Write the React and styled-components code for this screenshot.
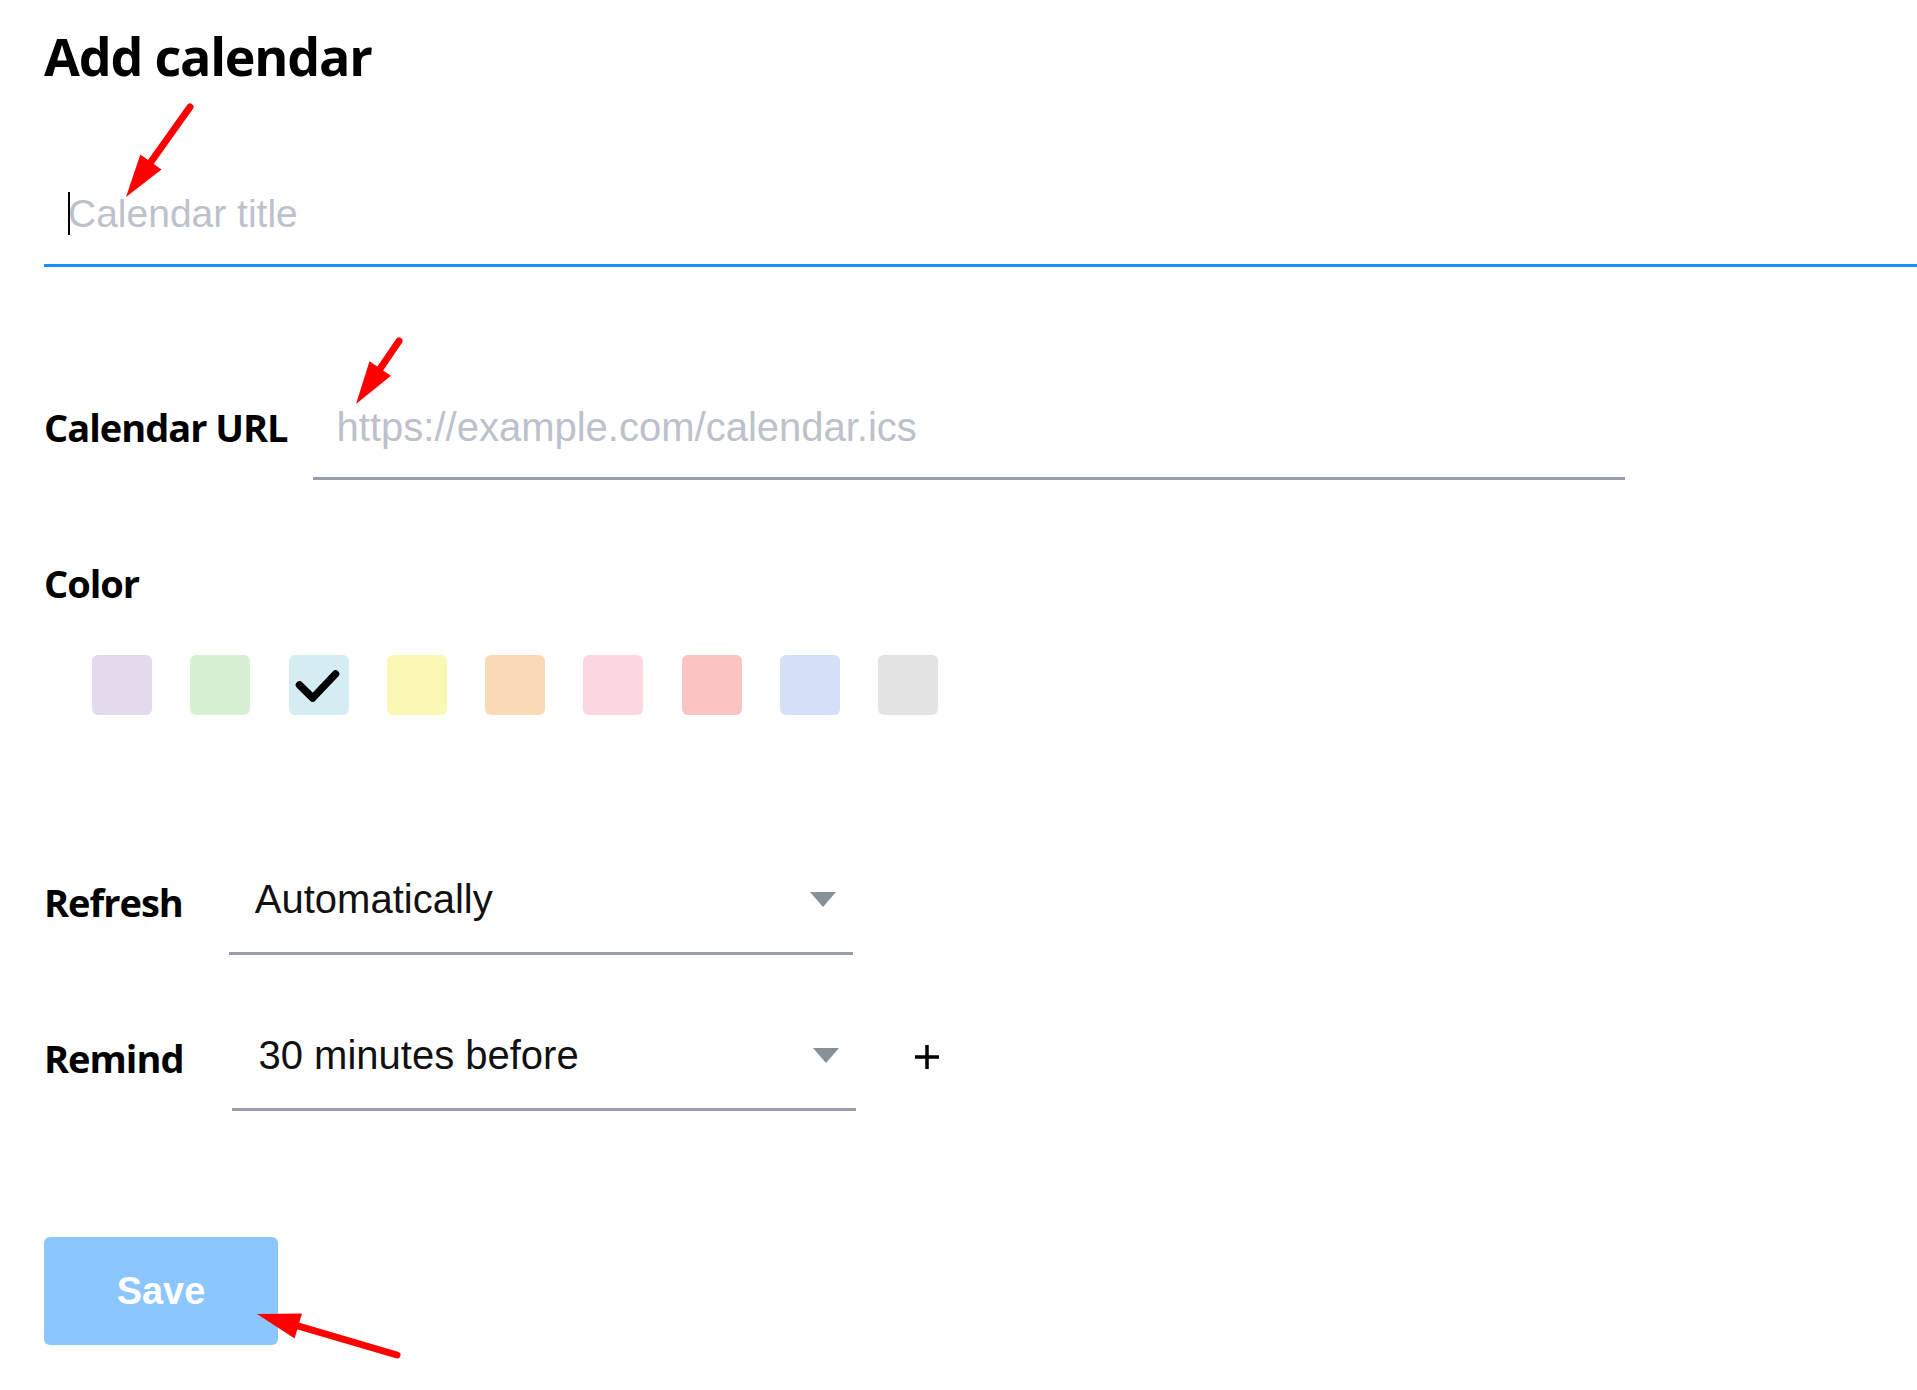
import React from 'react';
import styled, { createGlobalStyle } from 'styled-components';

const GlobalStyle = createGlobalStyle`
  html, body { margin: 0; padding: 0; background: #ffffff; }
  body { font-family: "Liberation Sans", Arial, sans-serif; }
  * { box-sizing: border-box; }
`;

const Page = styled.div`
  position: relative;
  width: 1917px;
  min-height: 1390px;
  padding-left: 44px;
  display: flex;
  flex-direction: column;
  align-items: flex-start;
  overflow: hidden;
`;

const Title = styled.h1`
  margin: 25px 0 0;
  font-family: "Open Sans", "Noto Sans", sans-serif;
  font-weight: 700;
  font-size: 52px;
  line-height: 62px;
  letter-spacing: -1.2px;
  color: #000;
`;

const TitleField = styled.div`
  position: relative;
  align-self: stretch;
  margin-top: 97px;
  display: flex;
  padding: 0 0 20px 24px;
  border-bottom: 3px solid #1890ff;
`;

const TextInput = styled.input`
  flex: 1;
  height: 60px;
  padding: 0;
  border: none;
  outline: none;
  background: transparent;
  font-family: "Liberation Sans", Arial, sans-serif;
  font-size: ${(p) => p.$size}px;
  color: #111;
  caret-color: transparent;
  &::placeholder { color: #bdc1cb; opacity: 1; }
`;

const Caret = styled.span`
  position: absolute;
  left: 24px;
  top: 8px;
  width: 2px;
  height: 43px;
  background: #000;
`;

const Row = styled.div`
  display: flex;
  align-items: flex-start;
  gap: ${(p) => p.$gap}px;
  margin-top: ${(p) => p.$top}px;
`;

const Label = styled.div`
  font-family: "Open Sans", "Noto Sans", sans-serif;
  font-weight: 700;
  font-size: 38px;
  line-height: 60px;
  letter-spacing: -1px;
  color: #000;
  white-space: nowrap;
`;

const UrlField = styled.div`
  width: 1312px;
  display: flex;
  padding: 0 0 20px 24px;
  border-bottom: 3px solid #9a9da9;
`;

const Section = styled.div`
  margin-top: ${(p) => p.$top}px;
`;

const Swatches = styled.div`
  display: flex;
  gap: 38.25px;
  margin-top: 42px;
  padding-left: 48px;
`;

const Swatch = styled.button`
  width: 60px;
  height: 60px;
  padding: 0;
  border: none;
  border-radius: 6px;
  background: ${(p) => p.$color};
  display: flex;
  align-items: center;
  justify-content: center;
  cursor: pointer;
`;

const Select = styled.div`
  width: 624px;
  display: flex;
  align-items: center;
  justify-content: space-between;
  padding: 4px 17px 30px 26px;
  border-bottom: 3px solid #9a9da9;
`;

const SelectValue = styled.span`
  font-family: "Liberation Sans", Arial, sans-serif;
  font-size: 40px;
  line-height: 46px;
  color: #111;
`;

const PlusButton = styled.span`
  display: block;
  width: 24px;
  height: 24px;
  margin-top: 17px;
  margin-left: 10px;
`;

const SaveButton = styled.button`
  margin-top: 126px;
  width: 234px;
  height: 108px;
  border: none;
  border-radius: 6px;
  background: #8cc6fe;
  color: #ffffff;
  font-family: "Liberation Sans", Arial, sans-serif;
  font-weight: 700;
  font-size: 38px;
  cursor: pointer;
`;

const Overlay = styled.svg`
  position: absolute;
  left: 0;
  top: 0;
  width: 1917px;
  height: 1390px;
  pointer-events: none;
`;

const colors = [
  '#e5d9ee',
  '#d7f0d3',
  '#d4edf3',
  '#fbf8b6',
  '#f9dab4',
  '#fcd7df',
  '#f9c4c2',
  '#d5dff7',
  '#e3e3e3',
];

const Triangle = () => (
  <svg width="26" height="15" viewBox="0 0 26 15">
    <polygon points="0,0 26,0 13,15" fill="#879199" />
  </svg>
);

const Arrow = ({ tail, tip }) => {
  const dx = tail[0] - tip[0];
  const dy = tail[1] - tip[1];
  const len = Math.hypot(dx, dy);
  const ux = dx / len;
  const uy = dy / len;
  const bx = tip[0] + ux * 43;
  const by = tip[1] + uy * 43;
  const px = -uy * 13;
  const py = ux * 13;
  return (
    <g>
      <line
        x1={tail[0]}
        y1={tail[1]}
        x2={tip[0] + ux * 30}
        y2={tip[1] + uy * 30}
        stroke="#ff0000"
        strokeWidth="7"
        strokeLinecap="round"
      />
      <polygon
        points={`${tip[0]},${tip[1]} ${bx + px},${by + py} ${bx - px},${by - py}`}
        fill="#ff0000"
      />
    </g>
  );
};

export default function App() {
  return (
    <>
      <GlobalStyle />
      <Page>
        <Title>Add calendar</Title>

        <TitleField>
          <TextInput $size={39} placeholder="Calendar title" />
          <Caret />
        </TitleField>

        <Row $top={130} $gap={25}>
          <Label>Calendar URL</Label>
          <UrlField>
            <TextInput $size={40} placeholder="https://example.com/calendar.ics" />
          </UrlField>
        </Row>

        <Section $top={73}>
          <Label>Color</Label>
          <Swatches>
            {colors.map((c, i) => (
              <Swatch key={c} $color={c}>
                {i === 2 && (
                  <svg width="60" height="60" viewBox="0 0 60 60" style={{ display: 'block' }}>
                    <polyline
                      points="10.5,30 23.7,43 46.5,19"
                      fill="none"
                      stroke="#000"
                      strokeWidth="7.5"
                      strokeLinecap="round"
                      strokeLinejoin="round"
                    />
                  </svg>
                )}
              </Swatch>
            ))}
          </Swatches>
        </Section>

        <Row $top={157} $gap={46}>
          <Label>Refresh</Label>
          <Select>
            <SelectValue>Automatically</SelectValue>
            <Triangle />
          </Select>
        </Row>

        <Row $top={73} $gap={49}>
          <Label>Remind</Label>
          <Select>
            <SelectValue>30 minutes before</SelectValue>
            <Triangle />
          </Select>
          <PlusButton>
            <svg width="24" height="24" viewBox="0 0 24 24" style={{ display: 'block' }}>
              <line x1="12" y1="0" x2="12" y2="24" stroke="#000" strokeWidth="3.5" />
              <line x1="0" y1="12" x2="24" y2="12" stroke="#000" strokeWidth="3.5" />
            </svg>
          </PlusButton>
        </Row>

        <SaveButton>Save</SaveButton>

        <Overlay viewBox="0 0 1917 1390">
          <Arrow tail={[190, 107]} tip={[126, 197]} />
          <Arrow tail={[399, 341]} tip={[356, 404]} />
          <Arrow tail={[397, 1355]} tip={[257, 1314]} />
        </Overlay>
      </Page>
    </>
  );
}
